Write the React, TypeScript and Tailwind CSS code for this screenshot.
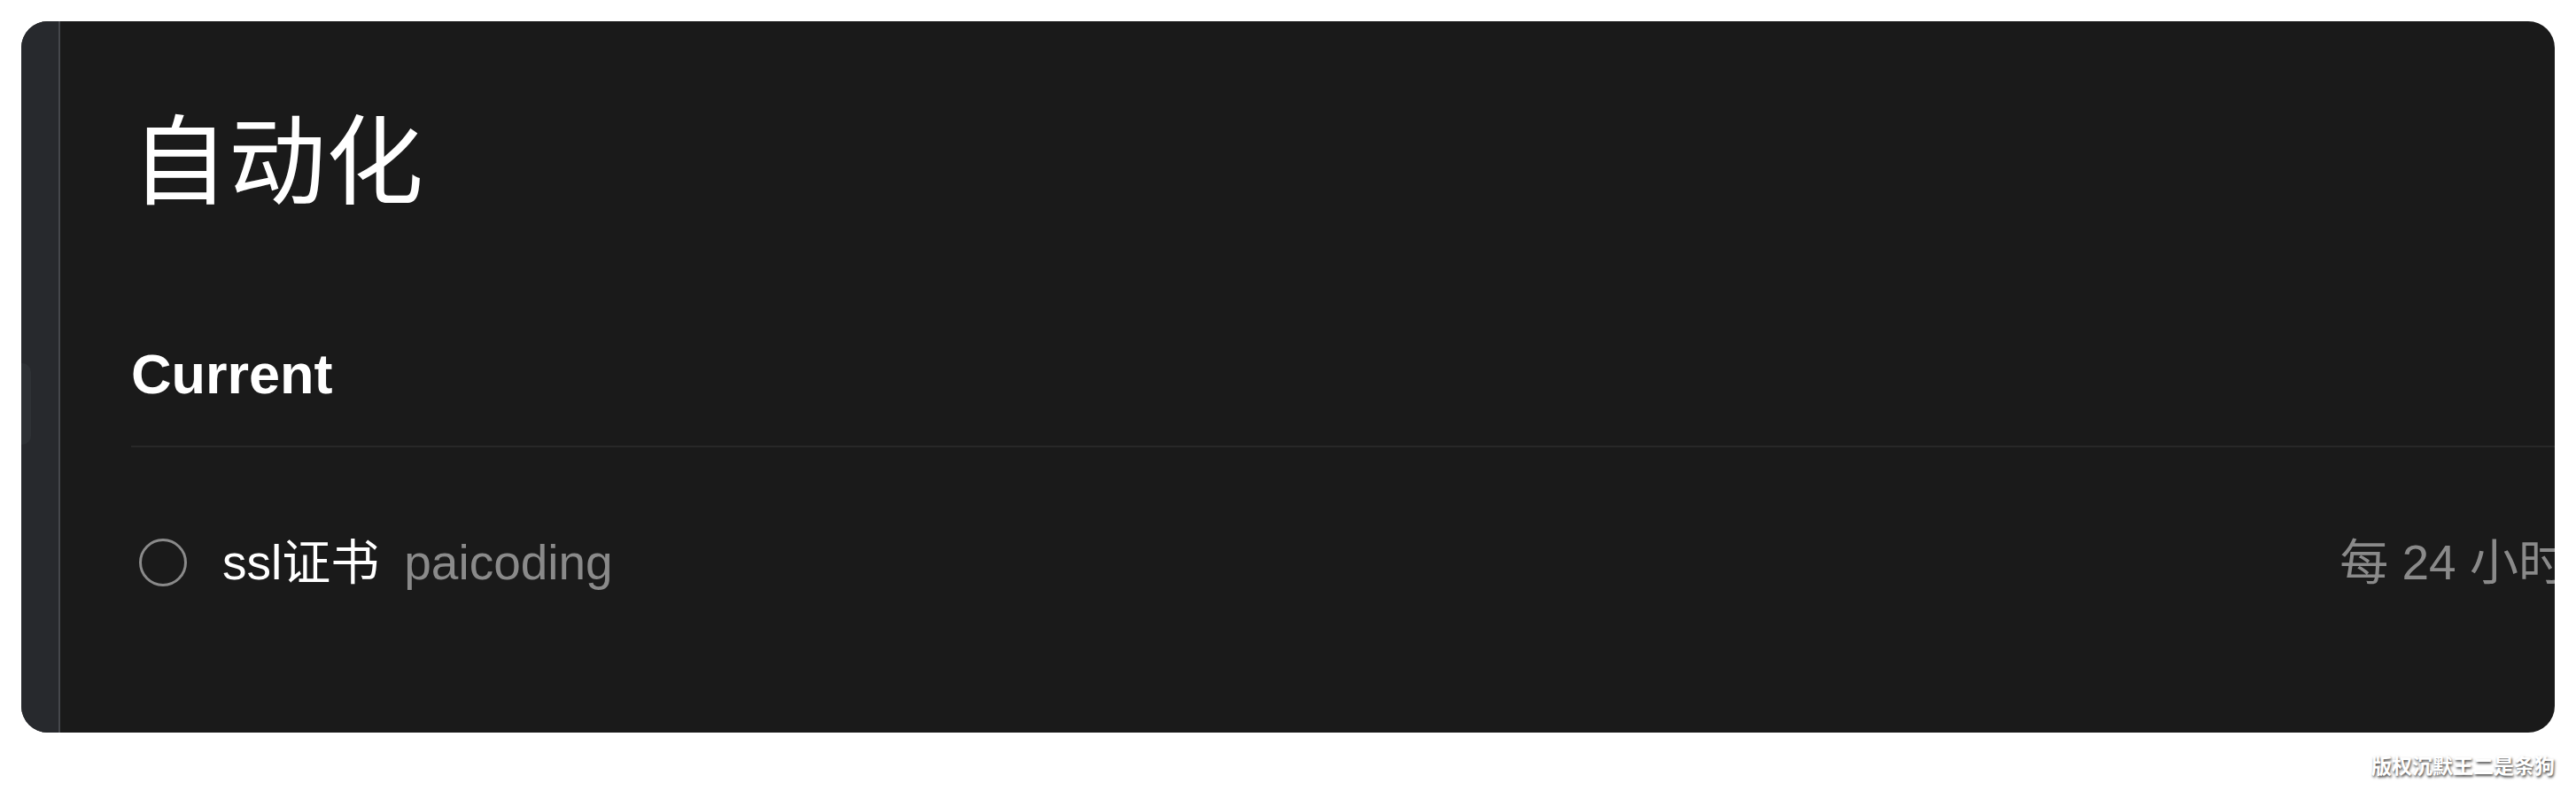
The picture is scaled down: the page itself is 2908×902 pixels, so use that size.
import React from 'react';

const sans = '"Liberation Sans", "Noto Sans CJK SC", sans-serif';
const cjk = '"Noto Sans CJK SC", "Liberation Sans", sans-serif';

const AutomationRow = ({ name, project, schedule }: { name: string; project: string; schedule: string }) => (
  <div className="flex items-center justify-between h-[80px] mt-[90px] mr-[-14px]">
    <div className="flex items-center">
      <div className="ml-[9px] w-[54px] h-[54px] rounded-full border-[3px] border-[#8a8a8a]" />
      <span className="ml-[40px] text-[55px] text-white" style={{ fontFamily: sans }}>
        {name}
      </span>
      <span className="ml-[28px] text-[55px] text-[#8a8a8a]" style={{ fontFamily: sans }}>
        {project}
      </span>
    </div>
    <span className="text-[55px] text-[#8a8a8a] whitespace-nowrap" style={{ fontFamily: sans }}>
      {schedule}
    </span>
  </div>
);

export default function App() {
  return (
    <div className="w-[2908px] h-[902px] bg-white">
      {/* Window card */}
      <div className="ml-[24px] pt-[24px]">
        <div className="w-[2860px] h-[803px] rounded-[30px] overflow-hidden bg-[#1a1a1a] flex">
          {/* Collapsed sidebar */}
          <div className="w-[44px] shrink-0 bg-[#27292d] border-r-2 border-[#45474c] flex flex-col">
            <div className="mt-[386px] h-[92px] w-[11px] rounded-r-[10px] bg-[#2e3135]" />
          </div>

          {/* Main */}
          <div className="flex-1 pl-[80px] flex flex-col">
            <h1
              className="mt-[95px] text-[110px] leading-[110px] font-normal text-white"
              style={{ fontFamily: cjk }}
            >
              自动化
            </h1>

            <h2
              className="mt-[158px] text-[63px] leading-[70px] font-bold text-white"
              style={{ fontFamily: sans }}
            >
              Current
            </h2>

            <div className="mt-[46px] h-[2px] bg-[#282828]" />

            <AutomationRow name="ssl证书" project="paicoding" schedule="每 24 小时" />
          </div>
        </div>

        {/* Watermark */}
        <div
          className="w-[2860px] mt-[21px] text-right text-[23px] leading-[30px] font-bold text-white [text-shadow:1px_2px_3px_rgba(0,0,0,0.75)]"
          style={{ fontFamily: cjk }}
        >
          版权沉默王二是条狗
        </div>
      </div>
    </div>
  );
}
